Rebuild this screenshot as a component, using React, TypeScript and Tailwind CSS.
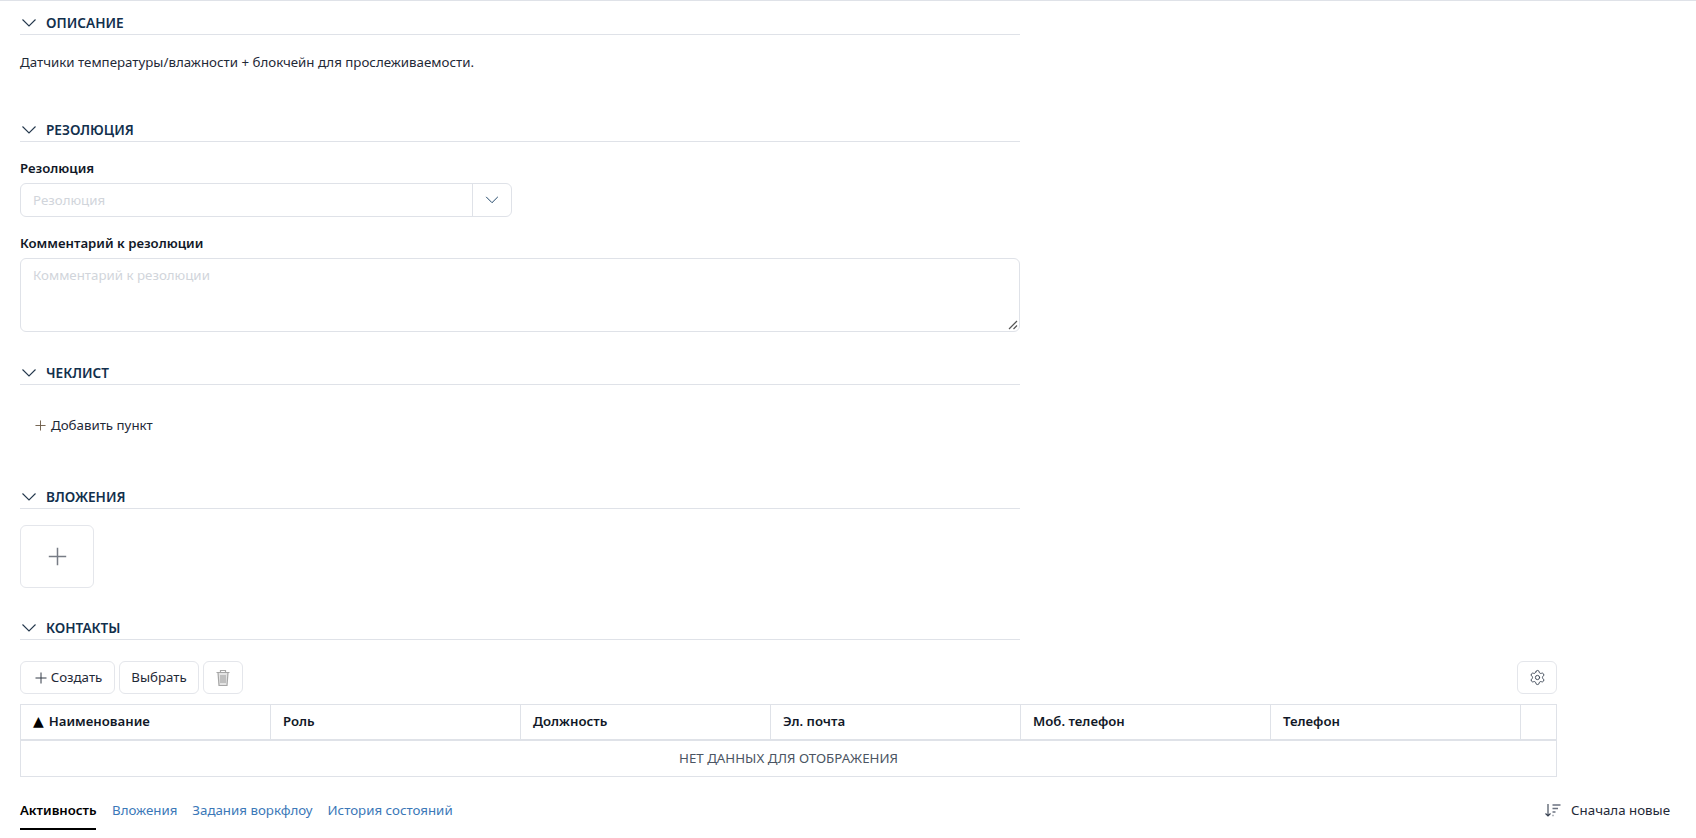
import React from "react";

const Chevron = ({ className = "", color = "#24384d" }: { className?: string; color?: string }) => (
  <svg width="16" height="10" viewBox="0 0 16 10" fill="none" className={className}>
    <path d="M1.500 1.500 L8 8 L14.500 1.500" stroke={color} strokeWidth="1.1" />
  </svg>
);

const Plus = ({ size = 12, color = "#4b5563", w = 1 }: { size?: number; color?: string; w?: number }) => (
  <svg width={size} height={size} viewBox="0 0 12 12" fill="none">
    <path d="M6 0.500V11.500M0.500 6H11.500" stroke={color} strokeWidth={w} />
  </svg>
);

const SectionHeader = ({ title, className }: { title: string; className: string }) => (
  <div className={`flex h-6 w-[1000px] items-center border-b border-[#dfe2e8] ${className}`}>
    <Chevron className="ml-px" />
    <span className="ml-[9px] text-[13.6px] font-semibold uppercase leading-5 text-[#12304d]">{title}</span>
  </div>
);

const Btn = ({ children, className = "" }: { children: React.ReactNode; className?: string }) => (
  <div className={`flex h-[33px] items-center justify-center rounded-md border border-[#e4e6eb] bg-white text-[#1f2937] ${className}`}>
    {children}
  </div>
);

export default function App() {
  const cols = ["Наименование", "Роль", "Должность", "Эл. почта", "Моб. телефон", "Телефон"];
  return (
    <div className="h-[838px] w-[1696px] overflow-hidden border-t border-[#dfe2e8] bg-white pl-5 font-['Noto_Sans',sans-serif] text-[13.3px] text-[#1f2937]">
      <SectionHeader title="Описание" className="mt-[10px]" />
      <p className="mt-[17px] h-5 leading-5">Датчики температуры/влажности + блокчейн для прослеживаемости.</p>

      <SectionHeader title="Резолюция" className="mt-[46px]" />
      <div className="mt-[16px] h-5 text-[13.2px] font-semibold leading-5 text-[#111827]">Резолюция</div>
      <div className="mt-[5px] flex h-[34px] w-[492px] rounded-md border border-[#dfe2e8]">
        <div className="flex-1 pl-3 leading-[32px] text-[#d1d5db]">Резолюция</div>
        <div className="flex w-[39px] items-center justify-center border-l border-[#dfe2e8]">
          <Chevron className="scale-90" color="#1f4668" />
        </div>
      </div>
      <div className="mt-[16px] h-5 text-[13.2px] font-semibold leading-5 text-[#111827]">Комментарий к резолюции</div>
      <div className="relative mt-[5px] h-[74px] w-[1000px] rounded-md border border-[#dfe2e8] pl-3 pt-[6px] leading-5 text-[#d1d5db]">
        Комментарий к резолюции
        <svg width="10" height="10" viewBox="0 0 10 10" className="absolute bottom-[1px] right-[1px]" fill="none">
          <path d="M1 9L9 1M5.500 9L9 5.500" stroke="#555" strokeWidth="1.2" />
        </svg>
      </div>

      <SectionHeader title="Чеклист" className="mt-[29px]" />
      <div className="mt-[30px] flex h-5 items-center pl-[15px] leading-5">
        <Plus size={11} color="#6b5a45" />
        <span className="ml-[5px]">Добавить пункт</span>
      </div>

      <SectionHeader title="Вложения" className="mt-[50px]" />
      <div className="mt-[16px] flex h-[63px] w-[74px] items-center justify-center rounded-md border border-[#e4e6eb]">
        <Plus size={19} color="#777c85" w={0.95} />
      </div>

      <SectionHeader title="Контакты" className="mt-[28px]" />
      <div className="mt-[21px] flex w-[1537px] gap-1">
        <Btn className="w-[95px] gap-[4px] pl-[2px]">
          <Plus size={12} color="#333a46" />
          Создать
        </Btn>
        <Btn className="w-[80px]">Выбрать</Btn>
        <Btn className="w-10">
          <svg width="16" height="18" viewBox="0 0 16 18" fill="none" stroke="#a6a6a6" strokeWidth="1.2">
            <path d="M1.500 3.500H14.500M5.500 3.500V1.500H10.500V3.500" />
            <path d="M3 3.500L4 16.500H12L13 3.500Z" fill="#e4e4e4" />
            <path d="M6 6V14M8 6V14M10 6V14" stroke="#9a9a9a" strokeWidth="1" />
          </svg>
        </Btn>
        <Btn className="ml-auto w-10">
          <svg width="17" height="17" viewBox="0 0 24 24" fill="none" stroke="#374151" strokeWidth="1.3" strokeLinecap="round" strokeLinejoin="round">
            <path d="M9.671 4.136a2.34 2.34 0 0 1 4.659 0 2.34 2.34 0 0 0 3.319 1.915 2.34 2.34 0 0 1 2.33 4.033 2.34 2.34 0 0 0 0 3.831 2.34 2.34 0 0 1-2.33 4.033 2.34 2.34 0 0 0-3.319 1.915 2.34 2.34 0 0 1-4.659 0 2.34 2.34 0 0 0-3.32-1.915 2.34 2.34 0 0 1-2.33-4.033 2.34 2.34 0 0 0 0-3.831A2.34 2.34 0 0 1 6.35 6.051a2.34 2.34 0 0 0 3.319-1.915" />
            <circle cx="12" cy="12" r="3" />
          </svg>
        </Btn>
      </div>

      <div className="mt-[10px] w-[1537px] border border-[#dfe2e8]">
        <div className="flex h-[36px] border-b-2 border-[#dfe2e8]">
          {cols.map((c, i) => (
            <div key={c} className="flex w-[250px] items-center border-r border-[#dfe2e8] pl-3 text-[13.2px] font-semibold text-[#111827]">
              {i === 0 && <span className="mr-[5px] -mt-[2px] font-['DejaVu_Sans'] text-[14px] font-normal text-black">▲</span>}
              {c}
            </div>
          ))}
          <div className="flex-1" />
        </div>
        <div className="flex h-[35px] items-center justify-center uppercase text-[#4b5563]">Нет данных для отображения</div>
      </div>

      <div className="mt-[23px] flex w-[1650px] items-start">
        <div className="w-[76px] border-b-2 border-black pb-[8px] text-[13.2px] font-semibold leading-5 text-black">Активность</div>
        <div className="ml-[16px] leading-5 text-[#3b78b8]">Вложения</div>
        <div className="ml-[15px] leading-5 text-[#3b78b8]">Задания воркфлоу</div>
        <div className="ml-[15px] leading-5 text-[#3b78b8]">История состояний</div>
        <div className="ml-auto flex items-center leading-5">
          <svg width="18" height="14" viewBox="0 0 18 14" fill="none" stroke="#374151" strokeWidth="1.1">
            <path d="M4 1V13M1.500 10.500L4 13L6.500 10.500" />
            <path d="M8.500 2H16.500M8.500 5.500H14M8.500 9H11.500M8.500 12.500H9.500" stroke="#6b7280" strokeWidth="1.3" />
          </svg>
          <span className="ml-[9px]">Сначала новые</span>
        </div>
      </div>
    </div>
  );
}
